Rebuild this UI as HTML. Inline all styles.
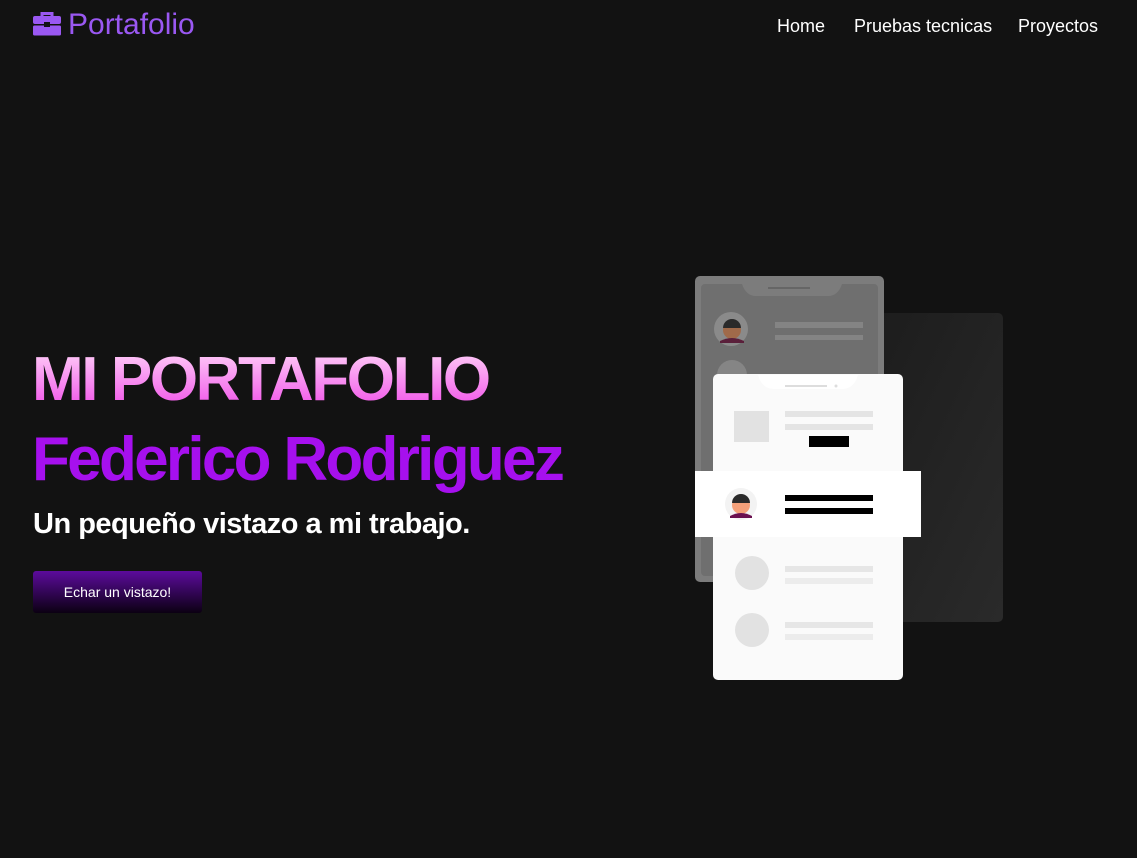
<!DOCTYPE html>
<html><head><meta charset="utf-8"><style>
*{margin:0;padding:0;box-sizing:border-box}
body{width:1137px;height:858px;background:#121212;font-family:"Liberation Sans",sans-serif;position:relative;overflow:hidden;color:#fff}
.logo{position:absolute;left:68px;top:8px;font-size:30px;color:#9a58f2;letter-spacing:0}
.nav{position:absolute;top:16px;font-size:18px;color:#fff}
h1{position:absolute;left:32px;font-weight:bold;font-size:62px;white-space:nowrap;line-height:1}
.t1{top:349px;letter-spacing:-2.4px;background:linear-gradient(#ffd0f8,#f04ee8);-webkit-background-clip:text;color:transparent}
.t2{top:429px;letter-spacing:-2.7px;color:#a610ee}
.sub{position:absolute;left:33px;top:508px;font-size:29px;font-weight:bold;letter-spacing:-0.5px}
.btn{position:absolute;left:33px;top:571px;width:169px;height:42px;border-radius:3px;background:linear-gradient(#5c0b9c,#0b0012);font-size:14px;text-align:center;line-height:43px}
</style></head><body>
<svg style="position:absolute;left:33px;top:12px" width="28" height="24" viewBox="0 0 28 24"><path d="M9 4V1.5h10V4" fill="none" stroke="#9a58f2" stroke-width="3"/><rect x="0" y="4" width="28" height="8" rx="2" fill="#9a58f2"/><rect x="0" y="13.5" width="28" height="10" rx="1.5" fill="#9a58f2"/><rect x="11" y="10" width="6" height="5" fill="#121212"/></svg>
<div class="logo">Portafolio</div>
<div class="nav" style="left:777px">Home</div>
<div class="nav" style="left:854px">Pruebas tecnicas</div>
<div class="nav" style="left:1018px">Proyectos</div>
<h1 class="t1">MI PORTAFOLIO</h1>
<h1 class="t2">Federico Rodriguez</h1>
<div class="sub">Un pequeño vistazo a mi trabajo.</div>
<div class="btn">Echar un vistazo!</div>
<svg style="position:absolute;left:0;top:0" width="1137" height="858">
<defs><linearGradient id="g" x1="0" y1="0" x2="1" y2="1"><stop offset="0" stop-color="#1c1c1c"/><stop offset="1" stop-color="#2a2a2a"/></linearGradient></defs>
<rect x="860" y="313" width="143" height="309" rx="5" fill="url(#g)"/>
<rect x="695" y="276" width="189" height="306" rx="5" fill="#7c7c7c"/>
<rect x="701" y="284" width="177" height="292" rx="4" fill="#6f6f6f"/>
<path d="M742 284h100q-4 12-14 12h-72q-10 0-14-12z" fill="#7c7c7c"/>
<rect x="768" y="287" width="42" height="2" fill="#666"/>
<circle cx="731" cy="329" r="17" fill="#8a8a8a"/>
<circle cx="732" cy="330" r="9" fill="#a06a4a"/>
<path d="M723 328a9 9 0 0 1 18 0z" fill="#2a2a2a"/>
<path d="M720 341q12-6 24 0v2h-24z" fill="#5a1f3a"/>
<rect x="775" y="322" width="88" height="6" fill="#848484"/>
<rect x="775" y="335" width="88" height="5" fill="#848484"/>
<circle cx="732" cy="375" r="15" fill="#858585"/>
<rect x="713" y="374" width="190" height="306" rx="5" fill="#fafafa"/>
<path d="M758 375h100q-4 14-16 14h-68q-12 0-16-14z" fill="#fff"/>
<rect x="785" y="385" width="42" height="2" fill="#ddd"/>
<circle cx="836" cy="386" r="1.5" fill="#ddd"/>
<rect x="734" y="411" width="35" height="31" fill="#e2e2e2"/>
<rect x="785" y="411" width="88" height="6" fill="#e4e4e4"/>
<rect x="785" y="424" width="88" height="6" fill="#e4e4e4"/>
<rect x="809" y="436" width="40" height="11" fill="#000"/>
<rect x="695" y="471" width="226" height="66" fill="#fff"/>
<circle cx="741" cy="504" r="16" fill="#f3f3f3"/>
<circle cx="741" cy="505" r="9" fill="#f4a07a"/>
<path d="M732 503a9 9 0 0 1 18 0z" fill="#2a2a2a"/>
<path d="M730 516q11-6 22 0v2h-22z" fill="#6a1050"/>
<rect x="785" y="495" width="88" height="6" fill="#000"/>
<rect x="785" y="508" width="88" height="6" fill="#000"/>
<circle cx="752" cy="573" r="17" fill="#e2e2e2"/>
<rect x="785" y="566" width="88" height="6" fill="#e6e6e6"/>
<rect x="785" y="578" width="88" height="6" fill="#ececec"/>
<circle cx="752" cy="630" r="17" fill="#e2e2e2"/>
<rect x="785" y="622" width="88" height="6" fill="#e6e6e6"/>
<rect x="785" y="634" width="88" height="6" fill="#ececec"/>
</svg>
</body></html>
